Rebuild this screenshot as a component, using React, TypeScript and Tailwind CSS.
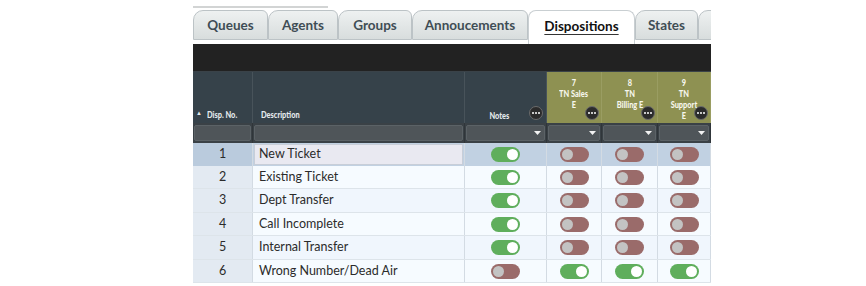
import React from "react";

const cols = "grid grid-cols-[60px_212px_82px_55px_56px_53px]";

const tabs = [
  { label: "Queues", w: "w-[75px]" },
  { label: "Agents", w: "w-[70px]" },
  { label: "Groups", w: "w-[74px]" },
  { label: "Annoucements", w: "w-[116px]" },
  { label: "Dispositions", w: "w-[107px]", active: true },
  { label: "States", w: "w-[63px]" },
  { label: "", w: "w-[30px]" },
];

const rows = [
  { no: 1, desc: "New Ticket", notes: true, flags: [false, false, false], h: "h-[23px]" },
  { no: 2, desc: "Existing Ticket", notes: true, flags: [false, false, false], h: "h-[23px]" },
  { no: 3, desc: "Dept Transfer", notes: true, flags: [false, false, false], h: "h-[24px]" },
  { no: 4, desc: "Call Incomplete", notes: true, flags: [false, false, false], h: "h-[23px]" },
  { no: 5, desc: "Internal Transfer", notes: true, flags: [false, false, false], h: "h-[24px]" },
  { no: 6, desc: "Wrong Number/Dead Air", notes: false, flags: [true, true, true], h: "h-[23px]" },
];

function Dots() {
  return (
    <div className="w-[14px] h-[14px] rounded-full bg-[#2b2b2b] border border-[#6b6b6b] flex items-center justify-center">
      <svg width="8" height="2" viewBox="0 0 8 2">
        <circle cx="1" cy="1" r="1" fill="#fff" />
        <circle cx="4" cy="1" r="1" fill="#fff" />
        <circle cx="7" cy="1" r="1" fill="#fff" />
      </svg>
    </div>
  );
}

function Toggle({ on }: { on: boolean }) {
  return (
    <div
      className={
        "w-[29px] h-[15px] rounded-full flex items-center px-[2px] " +
        (on ? "bg-[#5fae5c] justify-end" : "bg-[#9a6b6a] justify-start")
      }
    >
      <div className={"w-[11px] h-[11px] rounded-full " + (on ? "bg-white" : "bg-[#c3c3c3]")} />
    </div>
  );
}

function Caret() {
  return (
    <svg width="7" height="4" viewBox="0 0 7 4" className="mr-[3px]">
      <path d="M0 0 L7 0 L3.5 4 Z" fill="#f2f2f2" />
    </svg>
  );
}

// condensed header label: Lato black squeezed horizontally
function Narrow({ children, origin = "origin-center" }: { children: React.ReactNode; origin?: string }) {
  return <span className={`inline-block whitespace-nowrap scale-x-[0.74] ${origin}`}>{children}</span>;
}

export default function App() {
  return (
    <div className="w-[866px] h-[286px] bg-white overflow-hidden font-['Lato','Noto_Sans',sans-serif]">
      <div className="ml-[193px] w-[518px] overflow-hidden">
        {/* top edge line */}
        <div className="h-[6px]" />
        <div className="h-[2px] w-[135px] bg-[#d2d4d4]" />

        {/* tabs */}
        <div className="flex items-start mt-[2px] h-[34px]">
          {tabs.map((t) =>
            t.active ? (
              <div
                key={t.label}
                className={`${t.w} shrink-0 h-[34px] bg-white rounded-t-[8px] border border-b-0 border-[#c9cfd2] flex items-start justify-center pt-[5px] text-[13.5px] font-bold text-[#111] underline underline-offset-[3px] decoration-[#333]`}
              >
                {t.label}
              </div>
            ) : (
              <div
                key={t.label}
                className={`${t.w} shrink-0 h-[30px] bg-gradient-to-b from-[#eef1f1] to-[#d8dddd] rounded-tl-[10px] rounded-tr-[6px] border border-[#bcc3c6] flex items-center justify-center text-[13.5px] font-bold text-[#3f4d55]`}
              >
                {t.label}
              </div>
            )
          )}
        </div>

        {/* dark bar */}
        <div className="h-[28px] bg-[#222222] border-b border-[#3a4248]" />

        {/* header */}
        <div className={`${cols} h-[51px] bg-[#36424a] text-[#e4e9ec] font-black text-[10px] leading-[11px]`}>
          <div className="border-r border-[#48535a] flex items-end pb-[3px] pl-[3px]">
            <span className="text-[6px] mr-[5px] mb-[2px]">▲</span>
            <Narrow origin="origin-left">Disp. No.</Narrow>
          </div>
          <div className="border-r border-[#48535a] flex items-end pb-[3px] pl-[8px]">
            <Narrow origin="origin-left">Description</Narrow>
          </div>
          <div className="border-r border-[#48535a] relative flex items-end justify-center pb-[2px]">
            <span className="mr-[12px]">
              <Narrow>Notes</Narrow>
            </span>
            <div className="absolute right-[3px] bottom-[3px]">
              <Dots />
            </div>
          </div>
          {[
            ["7", "TN Sales", "E"],
            ["8", "TN", "Billing E"],
            ["9", "TN", "Support", "E"],
          ].map((lines, i) => (
            <div
              key={i}
              className="bg-[#8e9152] border-r border-[#9a9d62] relative flex flex-col items-center pt-[5px] text-[#f6f6ec]"
            >
              {lines.map((l, j) => (
                <Narrow key={j}>{l}</Narrow>
              ))}
              <div className="absolute right-[2px] bottom-[3px]">
                <Dots />
              </div>
            </div>
          ))}
        </div>

        {/* filter row */}
        <div className={`${cols} h-[20px] bg-[#3a4146]`}>
          {[false, false, true, true, true, true].map((caret, i) => (
            <div key={i} className="px-[1px] py-[2px] border-r border-[#30363a]">
              <div className="h-full rounded-[2px] bg-[#4f5559] border border-[#5b6266] flex items-center justify-end">
                {caret && <Caret />}
              </div>
            </div>
          ))}
        </div>

        {/* rows */}
        {rows.map((r, idx) => {
          const sel = idx === 0;
          const cell = sel ? "bg-[#c1d1e2]" : idx % 2 === 1 ? "bg-[#f6fbff]" : "bg-[#f0f6fd]";
          return (
            <div key={r.no} className={`${cols} ${r.h} border-b border-[#dde4ea] text-[12.5px] text-[#2b2b2b]`}>
              <div className={`${sel ? "bg-[#bacbdd]" : "bg-[#e3eaf2]"} border-r border-[#d3dbe3] flex items-center justify-center`}>
                {r.no}
              </div>
              <div className={`${cell} border-r border-[#d3dbe3] flex items-center ${sel ? "p-[1px]" : "pl-[6px]"}`}>
                {sel ? (
                  <div className="w-full h-full bg-[#e9e9f1] border border-[#c8ced8] flex items-center pl-[4px]">
                    {r.desc}
                  </div>
                ) : (
                  r.desc
                )}
              </div>
              <div className={`${cell} border-r border-[#d3dbe3] flex items-center justify-center`}>
                <Toggle on={r.notes} />
              </div>
              {r.flags.map((f, j) => (
                <div key={j} className={`${cell} border-r border-[#d3dbe3] flex items-center justify-center`}>
                  <Toggle on={f} />
                </div>
              ))}
            </div>
          );
        })}
      </div>
    </div>
  );
}
